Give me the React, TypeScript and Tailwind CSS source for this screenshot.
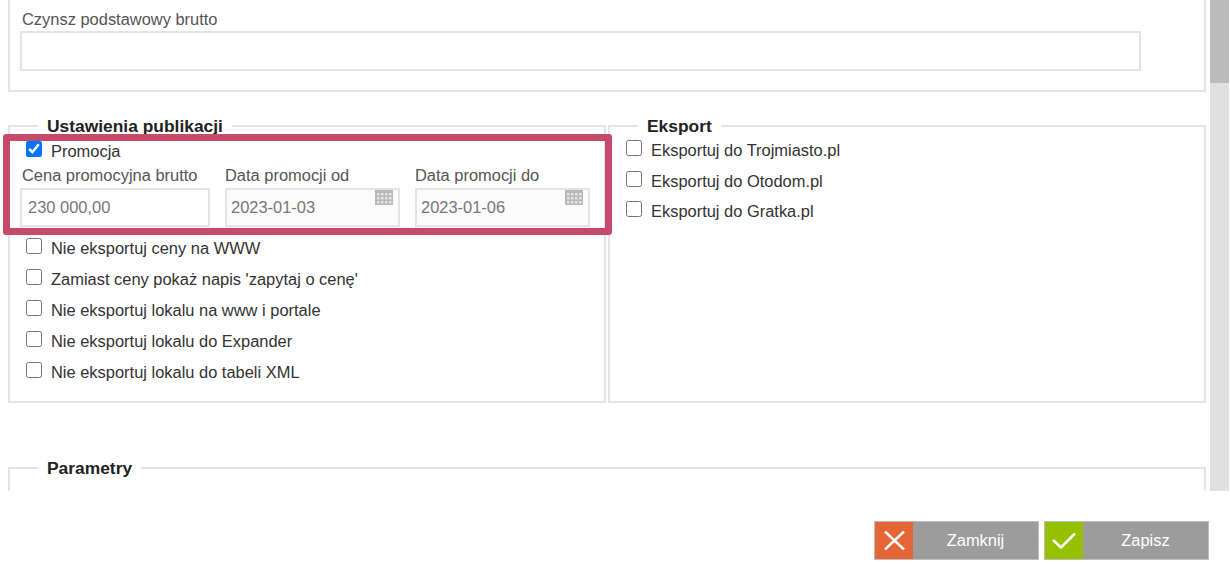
import React from "react";

function Check({ label, checked, cls }: { label: string; checked?: boolean; cls: string }) {
  return (
    <label className={`flex items-start h-[20px] ${cls}`}>
      <input type="checkbox" defaultChecked={checked} className="w-4 h-4 m-0 accent-[#0075ff] shrink-0" />
      <span className="ml-[9px] text-[#333] leading-[20px]">{label}</span>
    </label>
  );
}

function Field({ label, value, width, disabled, calendar, labelCls }: { label: string; value: string; width: string; disabled?: boolean; calendar?: boolean; labelCls?: string }) {
  return (
    <div className={`${width} flex flex-col`}>
      <div className={`text-[#555] leading-[20px] h-[21px] ${labelCls ?? ""}`}>{label}</div>
      <div className={`relative h-[39px] mt-[2px] border-2 border-[#e4e4e4] flex items-center text-[#777] ${disabled ? "bg-[#fbfbfb] px-[4px]" : "bg-white px-[6px]"}`}>
        {value}
        {calendar && (
          <svg className="absolute right-[5px] top-[0px]" width="18" height="15" viewBox="0 0 18 15">
            <rect width="18" height="15" fill="#b8b8b8" />
            {[3, 7, 11].map((y) =>
              [2, 6, 10, 14].map((x) => <rect key={`${x}-${y}`} x={x} y={y} width="2.5" height="2.5" fill="#e4e4e4" />)
            )}
          </svg>
        )}
      </div>
    </div>
  );
}

export default function App() {
  return (
    <div className="relative w-[1230px] h-[564px] overflow-hidden bg-white text-[16.45px] font-['Liberation_Sans',Arial,sans-serif]">
      <div className="flex h-[491px]">
        <div className="w-[1210px] shrink-0 overflow-hidden pl-2 pr-1">
          <div className="h-[92px] border-2 border-t-0 border-[#e4e4e4] pl-[10px] pt-[9px]">
            <div className="text-[#555] leading-[20px] h-[22px] pl-[2px]">Czynsz podstawowy brutto</div>
            <div className="w-[1121px] h-[40px] border-2 border-[#e4e4e4]" />
          </div>

          <div className="flex gap-[2px] mt-[25px] h-[286px]">
            <fieldset className="w-[598px] border-2 border-[#e4e4e4] px-[10px] min-w-0">
              <legend className="ml-[18px] px-[9px] font-bold text-[#222] leading-[18px] text-[17.4px]">Ustawienia publikacji</legend>
              <Check label="Promocja" checked cls="mt-[6px] ml-[6px]" />
              <div className="flex gap-[15px] mt-[4px]">
                <Field label="Cena promocyjna brutto" value="230 000,00" width="w-[190px]" labelCls="pl-[2px]" />
                <Field label="Data promocji od" value="2023-01-03" width="w-[175px]" disabled calendar />
                <Field label="Data promocji do" value="2023-01-06" width="w-[175px]" disabled calendar />
              </div>
              <Check label="Nie eksportuj ceny na WWW" cls="mt-[11px] ml-[6px]" />
              <Check label="Zamiast ceny pokaż napis 'zapytaj o cenę'" cls="mt-[11px] ml-[6px]" />
              <Check label="Nie eksportuj lokalu na www i portale" cls="mt-[11px] ml-[6px]" />
              <Check label="Nie eksportuj lokalu do Expander" cls="mt-[11px] ml-[6px]" />
              <Check label="Nie eksportuj lokalu do tabeli XML" cls="mt-[11px] ml-[6px]" />
            </fieldset>
            <fieldset className="w-[598px] border-2 border-[#e4e4e4] px-[16px] min-w-0">
              <legend className="ml-[12px] px-[9px] font-bold text-[#222] leading-[18px] text-[17.4px]">Eksport</legend>
              <Check label="Eksportuj do Trojmiasto.pl" cls="mt-[5px]" />
              <Check label="Eksportuj do Otodom.pl" cls="mt-[11px]" />
              <Check label="Eksportuj do Gratka.pl" cls="mt-[10px]" />
            </fieldset>
          </div>

          <fieldset className="mt-[57px] w-[1198px] h-[60px] border-2 border-[#e4e4e4] min-w-0">
            <legend className="ml-[28px] px-[9px] font-bold text-[#222] leading-[16px] text-[17.4px]">Parametry</legend>
          </fieldset>
        </div>
        <div className="w-[19px] h-full bg-[#e0e0e0]">
          <div className="h-[83px] bg-[#bbbbbb]" />
        </div>
      </div>

      <div className="flex justify-end gap-[5px] pt-[30px] pr-[21px]">
        <button className="flex w-[165px] h-[39px] bg-[#9c9c9c] text-white border border-[#bdbdbd]">
          <span className="w-[38px] h-full bg-[#e66537] flex items-center justify-center">
            <svg width="21" height="19" viewBox="0 0 21 19" fill="none" stroke="white" strokeWidth="2.5"><path d="M1 0.5 20 18.5M20 0.5 1 18.5" /></svg>
          </span>
          <span className="flex-1 h-full flex items-center justify-center">Zamknij</span>
        </button>
        <button className="flex w-[165px] h-[39px] bg-[#9c9c9c] text-white border border-[#bdbdbd]">
          <span className="w-[38px] h-full bg-[#95c100] flex items-center justify-center">
            <svg width="24" height="17" viewBox="0 0 24 17" fill="none" stroke="white" strokeWidth="2.5"><path d="M1 8 9 15.5 23 1.5" /></svg>
          </span>
          <span className="flex-1 h-full flex items-center justify-center">Zapisz</span>
        </button>
      </div>

      <div className="absolute left-[3px] top-[134px] w-[609px] h-[101px] border-[7px] border-[#c64b6b] rounded-[3px]" />
    </div>
  );
}
